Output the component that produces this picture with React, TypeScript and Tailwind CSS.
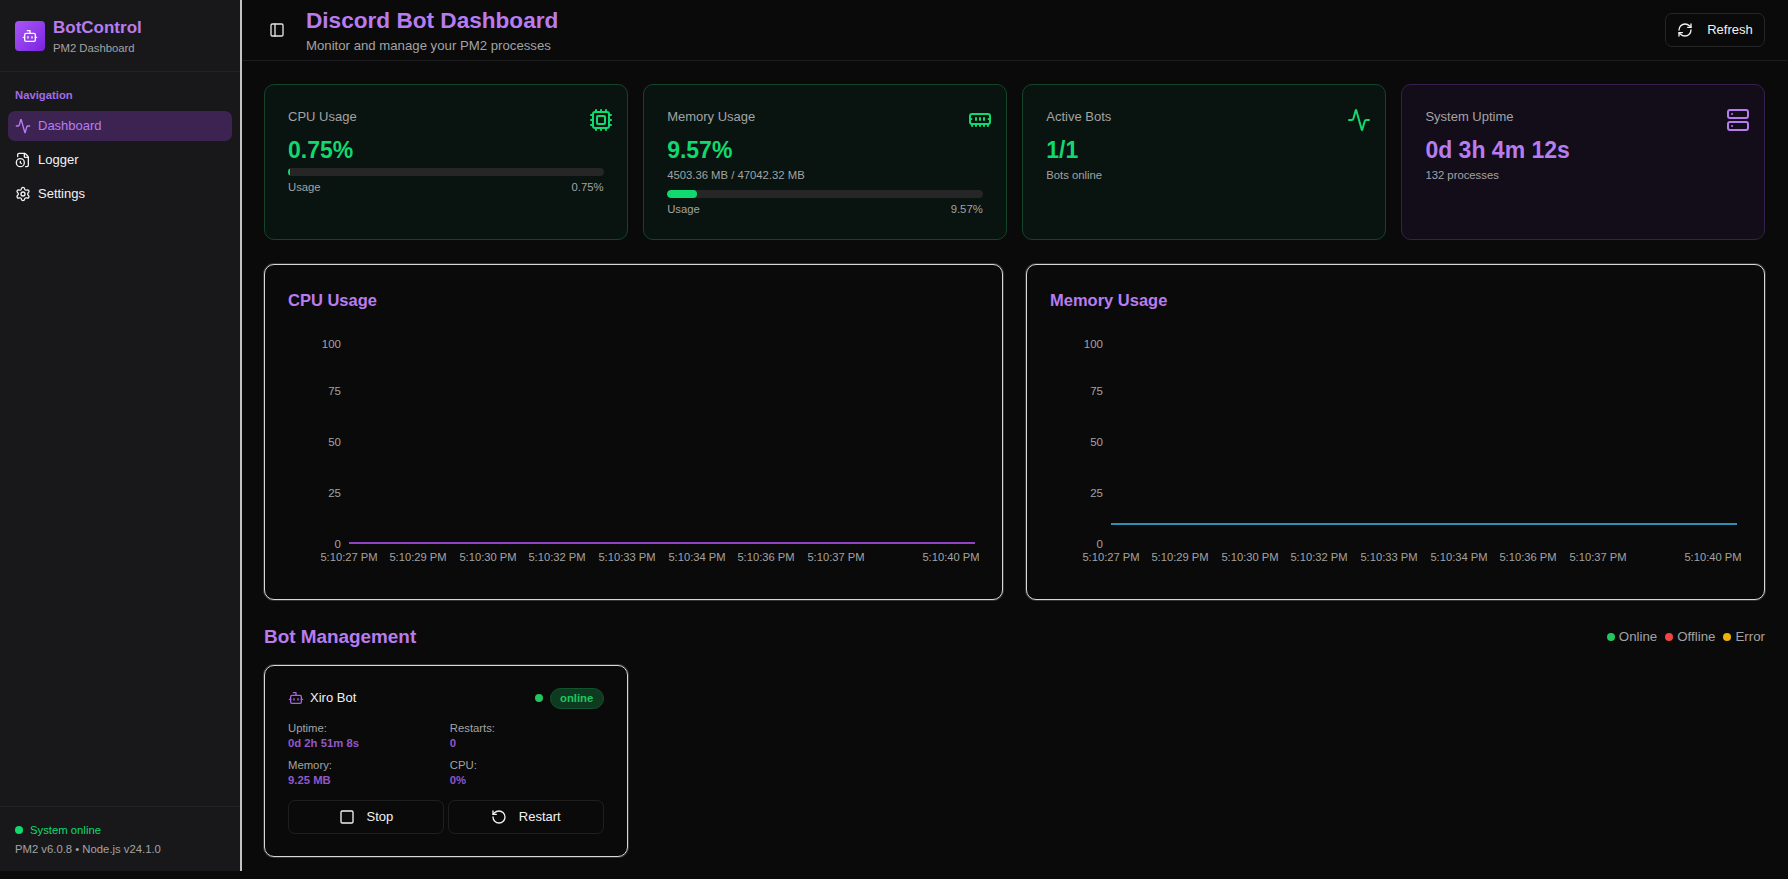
import React from 'react'
import { Activity, Bot, Cpu, FileClock, MemoryStick, PanelLeft, RefreshCw, RotateCcw, Server, Settings, Square } from 'lucide-react'

const TICKS: { label: string; y: number }[] = [
  { label: '100', y: 14 },
  { label: '75', y: 61 },
  { label: '50', y: 112 },
  { label: '25', y: 163 },
  { label: '0', y: 214 },
]

const TIMES: { label: string; x: number }[] = [
  { label: '5:10:27 PM', x: 61 },
  { label: '5:10:29 PM', x: 130 },
  { label: '5:10:30 PM', x: 200 },
  { label: '5:10:32 PM', x: 269 },
  { label: '5:10:33 PM', x: 339 },
  { label: '5:10:34 PM', x: 409 },
  { label: '5:10:36 PM', x: 478 },
  { label: '5:10:37 PM', x: 548 },
  { label: '5:10:40 PM', x: 663 },
]

function Chart({ title, lineY, color }: { title: string; lineY: number; color: string }) {
  return (
    <div className="h-[336px] rounded-[10px] border border-[#d8d8d8] bg-[#0a0a0a] px-[23px] pt-[23px] shadow-[0_0_0_1px_#333333]">
      <h3 className="text-[16.5px] leading-[24px] font-bold text-[#b87cf0]">{title}</h3>
      <svg className="mt-[18px] block h-[240px] w-full">
        {TICKS.map(t => (
          <text key={t.label} x={53} y={t.y + 4} textAnchor="end" fontSize={11.5} fill="#a3a3a3">{t.label}</text>
        ))}
        {TIMES.map(t => (
          <text key={t.label} x={t.x} y={231} textAnchor="middle" fontSize={11.2} fill="#a3a3a3">{t.label}</text>
        ))}
        <line x1={61} x2={687} y1={lineY} y2={lineY} stroke={color} strokeWidth={2} />
      </svg>
    </div>
  )
}

function Bar({ pct }: { pct: number }) {
  return (
    <div className="h-2 overflow-hidden rounded-full bg-[#262626]">
      <div className="h-full rounded-full bg-[#10d96f]" style={{ width: `${pct}%` }} />
    </div>
  )
}

function Usage({ pct }: { pct: number }) {
  return (
    <>
      <Bar pct={pct} />
      <div className="mt-[3px] flex justify-between text-[11.3px] leading-[16px] text-[#a3a3a3]">
        <span>Usage</span>
        <span>{pct}%</span>
      </div>
    </>
  )
}

function StatCard({ title, icon, tone = 'green', children }: { title: string; icon: React.ReactNode; tone?: 'green' | 'purple'; children: React.ReactNode }) {
  const box = tone === 'green' ? 'border-[#14452a] bg-[#09130f]' : 'border-[#362050] bg-[#130d1a]'
  return (
    <div className={`relative h-[156px] rounded-[10px] border px-[23px] pt-[22px] ${box}`}>
      <div className="absolute right-[14px] top-[23px]">{icon}</div>
      <p className="text-[13px] leading-[20px] text-[#a3a3a3]">{title}</p>
      {children}
    </div>
  )
}

function Stat({ value, purple }: { value: string; purple?: boolean }) {
  return <p className={`mt-[7px] text-[23px] leading-[32px] font-bold ${purple ? 'text-[#b87cf0]' : 'text-[#10d96f]'}`}>{value}</p>
}

function BotField({ label, value }: { label: string; value: string }) {
  return (
    <div className="text-[11.3px] leading-[15px]">
      <p className="text-[#a3a3a3]">{label}</p>
      <p className="font-bold text-[#9257c9]">{value}</p>
    </div>
  )
}

function NavItem({ icon, label, active }: { icon: React.ReactNode; label: string; active?: boolean }) {
  return (
    <div className={`flex h-[30px] items-center gap-[7px] rounded-[7px] px-[7px] text-[13px] ${active ? 'bg-[#3c2352] text-[#b87cf0]' : 'text-[#f2f2f2]'}`}>
      {icon}
      <span>{label}</span>
    </div>
  )
}

export default function App() {
  return (
    <div className="flex h-[879px] overflow-hidden bg-[#0a0a0a] font-['Liberation_Sans',sans-serif] text-white">
      {/* Sidebar */}
      <aside className="flex h-[871px] w-[242px] shrink-0 flex-col border-r-2 border-[#c4c4c4] bg-[#18181b]">
        <div className="flex h-[72px] items-center gap-[8px] border-b border-[#222225] px-[15px]">
          <div className="flex h-[30px] w-[30px] items-center justify-center rounded-[4px] bg-gradient-to-br from-[#a855f7] to-[#7c1fe0]">
            <Bot size={16} strokeWidth={2} className="text-white" />
          </div>
          <div className="pt-[2px]">
            <p className="text-[17px] leading-[22px] font-bold text-[#b87cf0]">BotControl</p>
            <p className="mt-[1px] text-[11.3px] leading-[16px] text-[#a3a3a3]">PM2 Dashboard</p>
          </div>
        </div>

        <div className="flex-1 px-[8px] pt-[15px]">
          <p className="px-[7px] text-[11.3px] leading-[16px] font-bold text-[#a06ce8]">Navigation</p>
          <nav className="mt-[8px] flex flex-col gap-[4px]">
            <NavItem active label="Dashboard" icon={<Activity size={16} />} />
            <NavItem label="Logger" icon={<FileClock size={16} />} />
            <NavItem label="Settings" icon={<Settings size={16} />} />
          </nav>
        </div>

        <div className="h-[65px] border-t border-[#222225] px-[15px] pt-[15px]">
          <div className="flex items-center gap-[7px] text-[11.3px] leading-[16px] text-[#10d96f]">
            <span className="h-2 w-2 rounded-full bg-[#10d96f]" />
            System online
          </div>
          <p className="mt-[3px] text-[11.3px] leading-[16px] text-[#a3a3a3]">PM2 v6.0.8 • Node.js v24.1.0</p>
        </div>
      </aside>

      {/* Main */}
      <main className="min-w-0 flex-1">
        <header className="flex h-[61px] items-center border-b border-[#1c1c1e] pl-[27px] pr-[23px]">
          <PanelLeft size={16} className="text-[#e5e5e5]" />
          <div className="ml-[21px] -mt-[1px]">
            <h1 className="text-[22.6px] leading-[32px] font-bold text-[#b87cf0]">Discord Bot Dashboard</h1>
            <p className="text-[13.2px] leading-[18px] text-[#a3a3a3]">Monitor and manage your PM2 processes</p>
          </div>
          <button className="ml-auto flex h-[34px] w-[100px] items-center justify-center gap-[14px] rounded-[7px] border border-[#262626] bg-[#0a0a0a] text-[13px] text-[#f2f2f2]">
            <RefreshCw size={16} />
            Refresh
          </button>
        </header>

        <div className="pl-[22px] pr-[23px] pt-[23px]">
          <div className="grid grid-cols-4 gap-[15.5px]">
            <StatCard title="CPU Usage" icon={<Cpu size={24} className="text-[#10d96f]" />}>
              <Stat value="0.75%" />
              <div className="mt-[2px]"><Usage pct={0.75} /></div>
            </StatCard>
            <StatCard title="Memory Usage" icon={<MemoryStick size={24} className="text-[#10d96f]" />}>
              <Stat value="9.57%" />
              <p className="mt-[1px] text-[11.3px] leading-[16px] text-[#a3a3a3]">4503.36 MB / 47042.32 MB</p>
              <div className="mt-[7px]"><Usage pct={9.57} /></div>
            </StatCard>
            <StatCard title="Active Bots" icon={<Activity size={24} className="text-[#10d96f]" />}>
              <Stat value="1/1" />
              <p className="mt-[1px] text-[11.3px] leading-[16px] text-[#a3a3a3]">Bots online</p>
            </StatCard>
            <StatCard tone="purple" title="System Uptime" icon={<Server size={24} className="text-[#b87cf0]" />}>
              <Stat purple value="0d 3h 4m 12s" />
              <p className="mt-[1px] text-[11.3px] leading-[16px] text-[#a3a3a3]">132 processes</p>
            </StatCard>
          </div>

          <div className="mt-[24px] grid grid-cols-2 gap-[23px]">
            <Chart title="CPU Usage" lineY={213} color="#8e44c4" />
            <Chart title="Memory Usage" lineY={194} color="#2f8fb3" />
          </div>

          <div className="mt-[23px] flex items-center justify-between">
            <h2 className="text-[18.9px] leading-[28px] font-bold text-[#b87cf0]">Bot Management</h2>
            <div className="flex items-center gap-[8px] text-[13.3px] text-[#a3a3a3]">
              <span className="flex items-center gap-[4px]"><span className="h-2 w-2 rounded-full bg-[#22c55e]" />Online</span>
              <span className="flex items-center gap-[4px]"><span className="h-2 w-2 rounded-full bg-[#ef4444]" />Offline</span>
              <span className="flex items-center gap-[4px]"><span className="h-2 w-2 rounded-full bg-[#eab308]" />Error</span>
            </div>
          </div>

          <div className="mt-[14px] grid grid-cols-4 gap-[15.5px]">
            <div className="h-[192px] rounded-[10px] border border-[#d8d8d8] px-[23px] pt-[21px] shadow-[0_0_0_1px_#333333]">
              <div className="flex h-[22px] items-center">
                <Bot size={16} className="text-[#a565dc]" />
                <span className="ml-[6px] text-[13px] text-[#f2f2f2]">Xiro Bot</span>
                <span className="ml-auto h-2 w-2 rounded-full bg-[#22c55e]" />
                <span className="ml-[7px] flex h-[21px] w-[54px] items-center justify-center rounded-full border border-[#14532d] bg-[#0d3a20] text-[11.3px] font-bold text-[#22c55e]">online</span>
              </div>
              <div className="mt-[12px] grid grid-cols-2 gap-x-[8px] gap-y-[7px]">
                <BotField label="Uptime:" value="0d 2h 51m 8s" />
                <BotField label="Restarts:" value="0" />
                <BotField label="Memory:" value="9.25 MB" />
                <BotField label="CPU:" value="0%" />
              </div>
              <div className="mt-[12px] grid grid-cols-2 gap-[4px]">
                <button className="flex h-[34px] items-center justify-center gap-[12px] rounded-[7px] border border-[#1f1f1f] text-[13px] text-[#f2f2f2]">
                  <Square size={16} />Stop
                </button>
                <button className="flex h-[34px] items-center justify-center gap-[12px] rounded-[7px] border border-[#1f1f1f] text-[13px] text-[#f2f2f2]">
                  <RotateCcw size={16} />Restart
                </button>
              </div>
            </div>
          </div>
        </div>
      </main>
    </div>
  )
}
